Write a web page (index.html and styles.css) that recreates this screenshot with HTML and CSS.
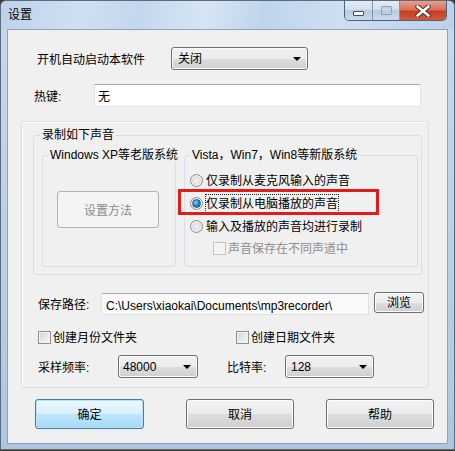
FILE: index.html
```html
<!DOCTYPE html>
<html lang="zh-CN">
<head>
<meta charset="utf-8">
<title>设置</title>
<link rel="stylesheet" href="styles.css">
</head>
<body>
<div class="window">
  <div class="titlebar">
    <span class="title">设置</span>
    <div class="caption">
      <div class="cbtn cmin"><span class="min-glyph"></span></div>
      <div class="cbtn cmax"><span class="max-glyph"></span></div>
      <div class="cbtn cclose">
        <svg width="16" height="12" viewBox="0 0 16 12">
          <path d="M2.5 1.5 L13.5 10.5 M13.5 1.5 L2.5 10.5" stroke="#4a2b26" stroke-width="4.4" stroke-linecap="round"/>
          <path d="M2.5 1.5 L13.5 10.5 M13.5 1.5 L2.5 10.5" stroke="#ffffff" stroke-width="2.6" stroke-linecap="round"/>
        </svg>
      </div>
    </div>
  </div>
  <div class="client">
    <div class="row row-auto">
      <span class="lbl lbl-auto">开机自动启动本软件</span>
      <div class="combo combo-auto"><span>关闭</span><i class="arrow"></i></div>
    </div>
    <div class="row row-hotkey">
      <span class="lbl lbl-hotkey">热键:</span>
      <div class="textbox tb-hotkey">无</div>
    </div>
    <div class="panel">
      <fieldset class="group g-rec">
        <legend>录制如下声音</legend>
        <div class="subgroups">
          <fieldset class="group g-xp">
            <legend>Windows XP等老版系统</legend>
            <div class="btn btn-disabled btn-method">设置方法</div>
          </fieldset>
          <fieldset class="group g-vista">
            <legend>Vista，Win7，Win8等新版系统</legend>
            <div class="opts">
              <div class="opt"><span class="radio"></span><span class="otext">仅录制从麦克风输入的声音</span></div>
              <div class="opt"><span class="radio checked"></span><span class="otext focus">仅录制从电脑播放的声音</span></div>
              <div class="opt"><span class="radio"></span><span class="otext">输入及播放的声音均进行录制</span></div>
              <div class="opt sub disabled"><span class="check dis"></span><span class="otext">声音保存在不同声道中</span></div>
            </div>
          </fieldset>
        </div>
      </fieldset>
      <div class="row row-path">
        <span class="lbl lbl-path">保存路径:</span>
        <div class="textbox tb-path">C:\Users\xiaokai\Documents\mp3recorder\</div>
        <div class="btn btn-browse">浏览</div>
      </div>
      <div class="row row-checks">
        <div class="chk chk-month"><span class="check"></span><span class="otext">创建月份文件夹</span></div>
        <div class="chk"><span class="check"></span><span class="otext">创建日期文件夹</span></div>
      </div>
      <div class="row row-rates">
        <span class="lbl lbl-rate">采样频率:</span>
        <div class="combo combo-rate"><span>48000</span><i class="arrow"></i></div>
        <span class="lbl lbl-bit">比特率:</span>
        <div class="combo combo-bit"><span>128</span><i class="arrow"></i></div>
      </div>
      <div class="highlight"></div>
    </div>
    <div class="actions">
      <div class="btn btn-default btn-ok">确定</div>
      <div class="btn btn-cancel">取消</div>
      <div class="btn btn-help">帮助</div>
    </div>
  </div>
</div>
</body>
</html>
```
FILE: styles.css
```css
* { box-sizing: border-box; }
html, body { margin: 0; padding: 0; }
body {
  width: 455px;
  height: 451px;
  background: #3f3b33;
  font-family: "Liberation Sans", "Noto Sans CJK SC", sans-serif;
  font-size: 12px;
  color: #000;
  overflow: hidden;
}
.window {
  width: 455px;
  height: 450px;
  border: 1px solid #5b6b7c;
  border-radius: 6px 6px 0 0;
  background: linear-gradient(180deg, #c6d9ee 0%, #b9cfe7 60%, #aec6e0 100%);
  display: flex;
  flex-direction: column;
}
.titlebar {
  height: 28px;
  display: flex;
  align-items: flex-start;
  background: linear-gradient(100deg, #bdd2ea 0%, #cfe0f2 18%, #c3d7ed 30%, #d6e5f4 45%, #bfd4eb 58%, #cddff2 75%, #bad0e9 100%);
  border-radius: 6px 6px 0 0;
}
.title {
  margin-left: 7px;
  margin-top: 6px;
  line-height: 16px;
  font-size: 12px;
  color: #000;
}
.caption {
  margin-left: auto;
  margin-right: 7px;
  display: flex;
  height: 20px;
  border: 1px solid #4e6177;
  border-top: none;
  border-radius: 0 0 5px 5px;
  overflow: hidden;
}
.cbtn {
  height: 19px;
  display: flex;
  align-items: center;
  justify-content: center;
}
.cmin, .cmax {
  background: linear-gradient(180deg, #e3ecf6 0%, #d2dfee 45%, #b9cbe0 50%, #c8d9ec 100%);
  border-right: 1px solid #8096af;
}
.cmin { width: 28px; }
.cmax { width: 27px; }
.cclose {
  width: 46px;
  background: linear-gradient(180deg, #e8a090 0%, #d8705c 45%, #c33f24 55%, #d25a3c 100%);
}
.min-glyph {
  width: 11px;
  height: 5px;
  margin-top: 6px;
  background: #fff;
  border: 1px solid #3f4f63;
  border-radius: 1px;
}
.max-glyph {
  width: 11px;
  height: 9px;
  border: 1px solid #8ea2b8;
  box-shadow: inset 0 2px 0 #c2d0df;
  border-radius: 1px;
}
.client {
  margin: 0 6px 0 6px;
  height: 415px;
  border: 1px solid #8ea3ba;
  background: #f0f0f0;
  display: flex;
  flex-direction: column;
}
.row { display: flex; }
.lbl { line-height: 16px; white-space: nowrap; padding-top: 2px; }
.otext { line-height: 16px; padding-top: 1px; }
.row-auto { margin-top: 17px; padding-left: 29px; align-items: center; height: 23px; }
.lbl-auto { width: 134px; }
.combo {
  height: 23px;
  border: 1px solid #707070;
  border-radius: 3px;
  background: linear-gradient(180deg, #f2f2f2 0%, #ebebeb 50%, #dddddd 51%, #cfcfcf 100%);
  box-shadow: inset 0 0 0 1px #fbfbfb;
  display: flex;
  align-items: center;
  padding-left: 5px;
  padding-right: 6px;
  line-height: 16px;
}
.combo span { flex: 1; padding-top: 1px; }
.arrow {
  width: 0;
  height: 0;
  border-left: 4px solid transparent;
  border-right: 4px solid transparent;
  border-top: 4px solid #000;
}
.combo-auto { width: 137px; padding-left: 6px; }
.row-hotkey { margin-top: 14px; padding-left: 26px; align-items: center; height: 23px; }
.lbl-hotkey { width: 60px; }
.textbox {
  height: 23px;
  border: 1px solid #e2e3ea;
  border-top-color: #abadb3;
  background: #fff;
  line-height: 16px;
  padding: 4px 3px 0;
  white-space: nowrap;
}
.tb-hotkey { width: 327px; }
.panel {
  position: relative;
  margin: 14px 0 0 13px;
  width: 408px;
  height: 267px;
  border: 1px solid #d5dfe5;
  border-radius: 3px;
  box-shadow: inset 1px 1px 0 #fff;
}
fieldset.group {
  margin: 0;
  padding: 0;
  min-width: 0;
  border: 1px solid #d5dfe5;
  border-radius: 3px;
}
fieldset.group legend {
  padding: 0 2px;
  margin-left: 6px;
  line-height: 14px;
  font-size: 12px;
  white-space: nowrap;
}
.g-rec {
  margin: 6px 0 0 11px !important;
  width: 389px;
  height: 147px;
}
.subgroups {
  display: flex;
  gap: 8px;
  margin-top: 6px;
  padding-left: 8px;
}
.g-xp { width: 134px; height: 119px; }
.g-vista { width: 234px; height: 119px; }
.g-xp legend, .g-vista legend { margin-left: 5px !important; }
.btn {
  height: 30px;
  border: 1px solid #707070;
  border-radius: 3px;
  background: linear-gradient(180deg, #f2f2f2 0%, #ebebeb 50%, #dddddd 51%, #cfcfcf 100%);
  box-shadow: inset 0 0 0 1px #fcfcfc;
  display: flex;
  align-items: center;
  justify-content: center;
  line-height: 16px;
  padding-top: 2px;
}
.btn-disabled {
  border-color: #adb2b5;
  background: #f4f4f4;
  box-shadow: none;
  color: #8a8a8a;
}
.btn-method { width: 102px; height: 37px; margin: 29px 0 0 14px; }
.opts { padding: 7px 0 0 5px; display: flex; flex-direction: column; }
.opt { display: flex; align-items: center; height: 23px; white-space: nowrap; line-height: 16px; }
.opt.sub { height: 20px; padding-left: 23px; }
.disabled { color: #8d8d8d; }
.radio {
  width: 13px;
  height: 13px;
  border-radius: 50%;
  border: 1px solid #8e8f8f;
  background: radial-gradient(circle at 50% 50%, #f2f2f2 0%, #e1e1e1 45%, #cfd0d0 100%);
  box-shadow: inset 0 0 0 1px #f4f4f4;
  margin-right: 3px;
  flex: none;
  display: flex;
  align-items: center;
  justify-content: center;
}
.radio.checked::after {
  content: "";
  width: 7px;
  height: 7px;
  border-radius: 50%;
  background: radial-gradient(circle at 40% 35%, #8ad2ff 0%, #2a8ad4 45%, #0d4f8c 100%);
  border: 1px solid #1c5f99;
}
.focus { outline: 1px dotted #222; outline-offset: 0; }
.check {
  width: 13px;
  height: 13px;
  border: 1px solid #8e8f8f;
  background: linear-gradient(135deg, #d2d4d6 0%, #e6e7e8 50%, #f6f6f6 100%);
  box-shadow: inset 0 0 0 1px #f4f4f4;
  margin-right: 2px;
  flex: none;
}
.check.dis {
  border-color: #c4c4c4;
  background: #f4f4f4;
  box-shadow: none;
}
.row-path { margin-top: 17px; padding-left: 16px; align-items: flex-start; height: 23px; }
.lbl-path { width: 63px; margin-top: 3px; }
.tb-path {
  width: 268px;
  height: 22px;
  margin-top: 1px;
  background: #f9f9f9;
  padding-left: 4px;
}
.btn-browse { width: 50px; height: 21px; margin-left: 5px; padding-top: 1px; }
.row-checks { margin-top: 16px; padding-left: 16px; height: 13px; align-items: center; }
.chk { display: flex; align-items: center; line-height: 16px; white-space: nowrap; }
.chk-month { width: 198px; }
.row-rates { margin-top: 11px; padding-left: 16px; align-items: center; height: 23px; }
.lbl-rate { width: 80px; }
.combo-rate { width: 80px; padding-left: 4px; }
.lbl-bit { width: 58px; margin-left: 29px; }
.combo-bit { width: 89px; }
.highlight {
  position: absolute;
  left: 156px;
  top: 67px;
  width: 201px;
  height: 26px;
  border: 3px solid #e41b1b;
}
.actions { display: flex; margin-top: 11px; padding-left: 27px; }
.btn-ok { width: 109px; }
.btn-default {
  border-color: #3c7fb1;
  background: linear-gradient(180deg, #eaf6fd 0%, #d9f0fc 50%, #bee6fd 51%, #a7d9f5 100%);
  box-shadow: inset 0 0 0 1px #b9e4f7;
}
.btn-cancel { width: 108px; margin-left: 42px; }
.btn-help { width: 108px; margin-left: 32px; }
```
